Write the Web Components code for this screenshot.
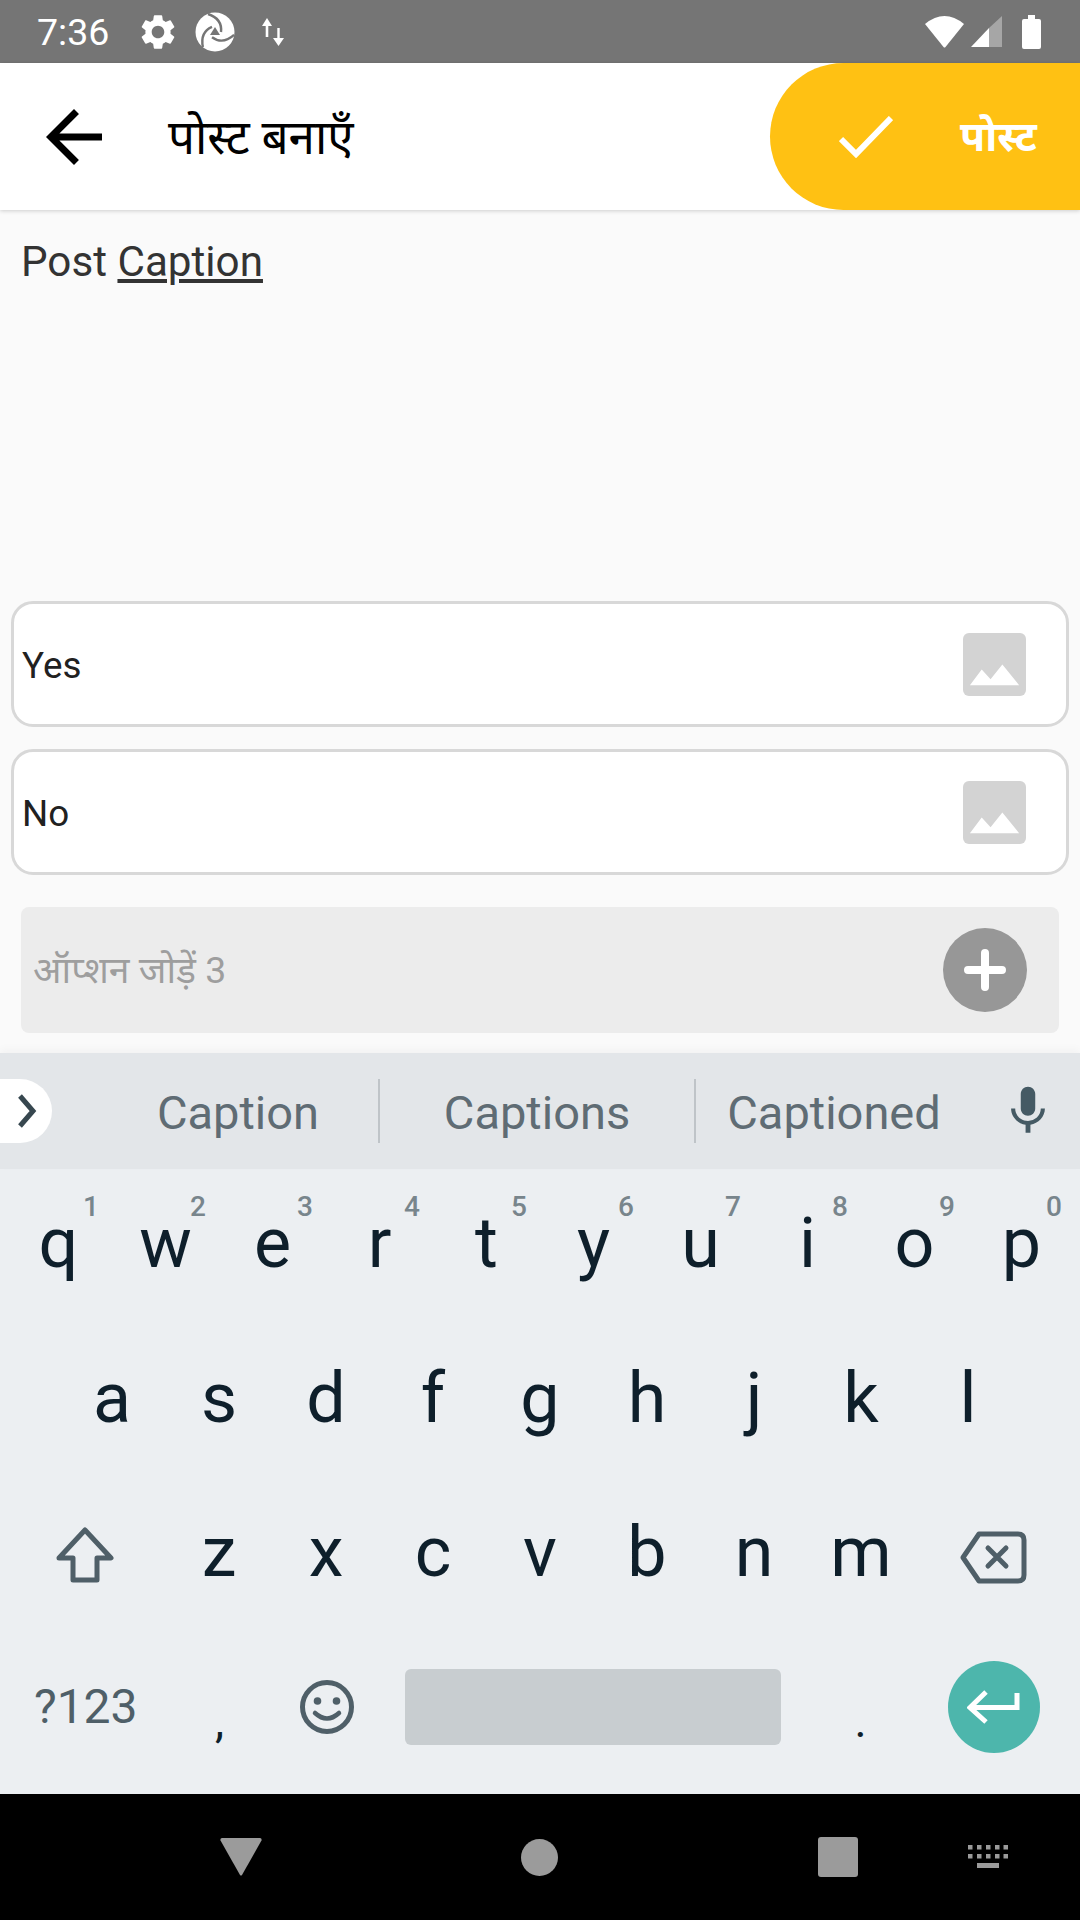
<!DOCTYPE html>
<html lang="hi">
<head>
<meta charset="utf-8">
<title>पोस्ट बनाएँ</title>
<style>
  html, body { margin: 0; padding: 0; }
  body {
    width: 1080px;
    height: 1920px;
    display: flex;
    flex-direction: column;
    overflow: hidden;
    background: #fafafa;
    font-family: Roboto, "Noto Sans Devanagari", "Lohit Devanagari", "Noto Sans", FreeSans, sans-serif;
  }
  main-content { flex: 1; }
</style>
</head>
<body>
  <status-bar></status-bar>
  <app-bar>पोस्ट बनाएँ</app-bar>
  <main-content>
    <caption-field>Post <u>Caption</u></caption-field>
    <option-card>Yes</option-card>
    <option-card>No</option-card>
    <add-option>ऑप्शन जोड़ें 3</add-option>
  </main-content>
  <suggestion-strip>
    <span>Caption</span>
    <span>Captions</span>
    <span>Captioned</span>
  </suggestion-strip>
  <key-board></key-board>
  <nav-bar></nav-bar>

<script>
function define(name, html) {
  const template = document.createElement("template");
  template.innerHTML = html;
  customElements.define(name, class extends HTMLElement {
    constructor() {
      super();
      this.attachShadow({ mode: "open" });
      this.shadowRoot.appendChild(template.content.cloneNode(true));
    }
  });
}

define("status-bar", `
<style>
  :host { display: flex; align-items: center; height: 63px; flex: none; padding: 0 39px 0 37px; box-sizing: border-box; background: #757575; color: #fff; }
  .time { font-size: 37.5px; width: 72px; white-space: nowrap; }
  svg { display: block; flex: none; fill: #fff; }
  .gear { margin-left: 28px; }
  .logo { margin-left: 16px; }
  .data { margin-left: 27px; }
  .wifi { margin-left: auto; }
  .signal { margin-left: 6px; }
  .battery { margin-left: 20px; }
</style>
<span class="time">7:36</span>
<svg class="gear" width="42" height="42" viewBox="0 0 24 24"><path d="M19.14 12.94c.04-.3.06-.61.06-.94 0-.32-.02-.64-.07-.94l2.03-1.58a.49.49 0 0 0 .12-.61l-1.92-3.32a.488.488 0 0 0-.59-.22l-2.39.96c-.5-.38-1.03-.7-1.62-.94l-.36-2.54a.484.484 0 0 0-.48-.41h-3.84c-.24 0-.43.17-.47.41l-.36 2.54c-.59.24-1.13.57-1.62.94l-2.39-.96c-.22-.08-.47 0-.59.22L2.74 8.87c-.12.21-.08.47.12.61l2.03 1.58c-.05.3-.09.63-.09.94s.02.64.07.94l-2.03 1.58a.49.49 0 0 0-.12.61l1.92 3.32c.12.22.37.29.59.22l2.39-.96c.5.38 1.03.7 1.62.94l.36 2.54c.05.24.24.41.48.41h3.84c.24 0 .44-.17.47-.41l.36-2.54c.59-.24 1.13-.56 1.62-.94l2.39.96c.22.08.47 0 .59-.22l1.92-3.32c.12-.22.07-.47-.12-.61l-2.01-1.58zM12 15.6c-1.98 0-3.6-1.62-3.6-3.6s1.62-3.6 3.6-3.6 3.6 1.62 3.6 3.6-1.62 3.6-3.6 3.6z"/></svg>
<svg class="logo" width="40" height="40" viewBox="0 0 40 40">
  <circle cx="20" cy="20" r="19.5"/>
  <g fill="none" stroke="#757575" stroke-width="2.4">
    <path d="M13 2C22 5 27 11 26 20"/>
    <path d="M13 2C22 5 27 11 26 20" transform="rotate(120 20 20)"/>
    <path d="M13 2C22 5 27 11 26 20" transform="rotate(240 20 20)"/>
  </g>
  <path d="M20 15L25 23L15 23Z" fill="#757575"/>
</svg>
<svg class="data" width="23" height="28" viewBox="0 0 23 28">
  <path d="M0 8L5 0L10 8H6.3V19H3.7V8Z"/>
  <path d="M11 20H15.3V10H17.7V20H22L16.5 28Z"/>
</svg>
<svg class="wifi" width="41" height="32" viewBox="0 0 41 32"><path d="M1 8Q20.5-8 40 8L21.5 31Q20.5 32 19.5 31Z"/></svg>
<svg class="signal" width="31" height="31" viewBox="0 0 31 31">
  <path d="M0 31L18 12V31Z"/>
  <path d="M18 12L31 0V31H18Z" fill="#a6a6a6"/>
</svg>
<svg class="battery" width="19" height="34" viewBox="0 0 19 34"><path d="M6 0H13V4H17Q19 4 19 6V32Q19 34 17 34H2Q0 34 0 32V6Q0 4 2 4H6Z"/></svg>
`);

define("app-bar", `
<style>
  :host { display: flex; align-items: center; height: 147px; flex: none; padding-left: 32px; box-sizing: border-box; background: #fff; color: #000; position: relative; z-index: 1; box-shadow: 0 1px 4px rgba(0,0,0,.18); }
  .back { display: block; flex: none; }
  .title { margin-left: 52px; padding-top: 10px; font-size: 47.5px; white-space: nowrap; }
  post-button { margin-left: auto; align-self: flex-start; }
</style>
<svg class="back" width="84" height="84" viewBox="0 0 24 24"><path d="M20 11H7.83l5.59-5.59L12 4l-8 8 8 8 1.41-1.41L7.83 13H20v-2z"/></svg>
<span class="title"><slot></slot></span>
<post-button></post-button>
`);

define("post-button", `
<style>
  :host { display: flex; align-items: center; width: 310px; height: 147px; box-sizing: border-box; padding-left: 69px; background: #ffc113; border-radius: 73.5px 0 0 73.5px; color: #fff; }
  svg { display: block; flex: none; }
  span { margin-left: 67px; padding-top: 8px; font-size: 41px; font-weight: 700; white-space: nowrap; }
</style>
<svg width="54" height="42" viewBox="0 0 54 42"><path d="M2 23L17 38L52 2" fill="none" stroke="#fff" stroke-width="6"/></svg>
<span>पोस्ट</span>
`);

define("main-content", `
<style>
  :host { display: flex; flex-direction: column; min-height: 0; }
</style>
<slot></slot>
`);

define("caption-field", `
<style>
  :host { display: block; height: 391px; box-sizing: border-box; padding: 28px 21px 0; font-size: 42.2px; line-height: 48px; color: #333; flex: none; }
</style>
<slot></slot>
`);

define("option-card", `
<style>
  :host { display: flex; align-items: center; justify-content: space-between; height: 126px; flex: none; box-sizing: border-box; margin: 0 11px 22px; padding: 0 40px 0 8px; background: #fff; border: 3px solid #d8d8d8; border-radius: 22px; font-size: 36.75px; color: #212121; }
  span { padding-top: 2px; }
  svg { display: block; flex: none; }
</style>
<span><slot></slot></span>
<svg width="63" height="63" viewBox="0 0 64 64">
  <rect width="64" height="64" rx="6" fill="#d3d3d3"/>
  <path d="M7 53L19 37L28 47L40 32L57 53Z" fill="#fff"/>
</svg>
`);

define("add-option", `
<style>
  :host { display: flex; align-items: center; justify-content: space-between; height: 126px; flex: none; box-sizing: border-box; margin: 10px 21px 0; padding: 0 32px 0 12px; background: #ececec; border-radius: 8px; font-size: 37.3px; color: #9e9e9e; }
  span { padding-top: 6px; }
  svg { display: block; flex: none; }
</style>
<span><slot></slot></span>
<svg width="84" height="84" viewBox="0 0 84 84">
  <circle cx="42" cy="42" r="42" fill="#979797"/>
  <path d="M42 25V59M25 42H59" stroke="#fff" stroke-width="8" stroke-linecap="round"/>
</svg>
`);

define("suggestion-strip", `
<style>
  :host { display: flex; align-items: center; height: 116px; flex: none; background: #e3e6e9; position: relative; box-shadow: 0 -4px 8px rgba(0,0,0,.03); color: #5f6c74; font-size: 47px; }
  .pill { display: flex; align-items: center; justify-content: center; width: 52px; height: 64px; margin-right: 46px; padding-left: 2px; box-sizing: border-box; flex: none; background: #fff; border-radius: 0 32px 32px 0; }
  svg { display: block; flex: none; }
  .cells { display: flex; align-items: center; height: 64px; }
  ::slotted(span) { display: flex; align-items: center; justify-content: center; height: 64px; box-sizing: border-box; padding-top: 2px; flex: none; white-space: nowrap; }
  ::slotted(span:nth-child(1)) { width: 282px; border-right: 2px solid #bfc4c8; }
  ::slotted(span:nth-child(2)) { width: 316px; border-right: 2px solid #bfc4c8; }
  ::slotted(span:nth-child(3)) { width: 276px; }
  .mic { margin-left: 27px; }
</style>
<div class="pill"><svg width="20" height="34" viewBox="0 0 20 34"><path d="M3 2L16 17L3 32" fill="none" stroke="#37474f" stroke-width="5"/></svg></div>
<div class="cells"><slot></slot></div>
<svg class="mic" width="58" height="58" viewBox="0 0 24 24" fill="#455a64"><path d="M12 14c1.66 0 2.99-1.34 2.99-3L15 5c0-1.66-1.34-3-3-3S9 3.34 9 5v6c0 1.66 1.34 3 3 3zm5.3-3c0 3-2.54 5.1-5.3 5.1S6.7 14 6.7 11H5c0 3.41 2.72 6.23 6 6.72V21h2v-3.28c3.28-.48 6-3.3 6-6.72h-1.7z"/></svg>
`);

define("kb-key", `
<style>
  :host { display: flex; align-items: center; justify-content: center; width: 107px; height: 100%; flex: none; position: relative; font-size: 70px; color: #0e1f2b; }
  .hint { position: absolute; left: 72px; top: 24px; width: 28px; text-align: center; font-size: 28px; font-weight: 500; line-height: 34px; color: #78858c; }
</style>
<slot></slot>
<span class="hint"><slot name="hint"></slot></span>
`);

define("key-row", `
<style>
  :host { display: flex; justify-content: center; align-items: stretch; height: 154.5px; flex: none; }
</style>
<slot></slot>
`);

define("key-board", `
<style>
  :host { display: flex; flex-direction: column; height: 625px; flex: none; box-sizing: border-box; background: #eceff2; }
  key-row:first-of-type { margin-top: -3px; }
  .wide { width: 160.5px; }
  svg { display: block; }
  .sym { font-size: 48px; color: #4f5f68; }
  .small { font-size: 46px; padding-top: 28px; box-sizing: border-box; }
  .space { width: 427px; }
  .space div { width: 376px; height: 76px; margin-left: -2px; background: #c8cdd0; border-radius: 6px; }
  .enter { width: 92px; height: 92px; margin-top: 1px; border-radius: 50%; background: #4db6ac; display: flex; align-items: center; justify-content: center; }
  .shift { margin-top: 6px; }
  .del { margin: 10px 0 0 -2px; }
</style>
<key-row>
  <kb-key>q<span slot="hint">1</span></kb-key>
  <kb-key>w<span slot="hint">2</span></kb-key>
  <kb-key>e<span slot="hint">3</span></kb-key>
  <kb-key>r<span slot="hint">4</span></kb-key>
  <kb-key>t<span slot="hint">5</span></kb-key>
  <kb-key>y<span slot="hint">6</span></kb-key>
  <kb-key>u<span slot="hint">7</span></kb-key>
  <kb-key>i<span slot="hint">8</span></kb-key>
  <kb-key>o<span slot="hint">9</span></kb-key>
  <kb-key>p<span slot="hint">0</span></kb-key>
</key-row>
<key-row>
  <kb-key>a</kb-key><kb-key>s</kb-key><kb-key>d</kb-key><kb-key>f</kb-key><kb-key>g</kb-key><kb-key>h</kb-key><kb-key>j</kb-key><kb-key>k</kb-key><kb-key>l</kb-key>
</key-row>
<key-row>
  <kb-key class="wide"><svg class="shift" width="58" height="56" viewBox="0 0 58 56"><path d="M29 3L55 31H41V53H17V31H3Z" fill="none" stroke="#4f5f68" stroke-width="5" stroke-linejoin="round"/></svg></kb-key>
  <kb-key>z</kb-key><kb-key>x</kb-key><kb-key>c</kb-key><kb-key>v</kb-key><kb-key>b</kb-key><kb-key>n</kb-key><kb-key>m</kb-key>
  <kb-key class="wide"><svg class="del" width="67" height="53" viewBox="0 0 67 53"><path d="M19 3H58Q64 3 64 9V44Q64 50 58 50H19L3 26.5Z" fill="none" stroke="#4f5f68" stroke-width="5" stroke-linejoin="round"/><path d="M28 17L46 35M46 17L28 35" stroke="#4f5f68" stroke-width="5" stroke-linecap="round"/></svg></kb-key>
</key-row>
<key-row>
  <kb-key class="wide sym">?123</kb-key>
  <kb-key class="small">,</kb-key>
  <kb-key><svg width="54" height="54" viewBox="0 0 54 54"><circle cx="27" cy="27" r="24.5" fill="none" stroke="#4f5f68" stroke-width="5"/><circle cx="17.5" cy="21" r="3.8" fill="#4f5f68"/><circle cx="36.5" cy="21" r="3.8" fill="#4f5f68"/><path d="M15 33Q27 44 39 33" fill="none" stroke="#4f5f68" stroke-width="4.5" stroke-linecap="round"/></svg></kb-key>
  <kb-key class="space"><div></div></kb-key>
  <kb-key class="small">.</kb-key>
  <kb-key class="wide"><div class="enter"><svg width="54" height="36" viewBox="0 0 54 36"><path d="M19 3L3 18.5L19 33M4 18.5H50V4" fill="none" stroke="#fff" stroke-width="5"/></svg></div></kb-key>
</key-row>
`);

define("nav-bar", `
<style>
  :host { display: block; height: 126px; flex: none; background: #000; position: relative; }
  .row { display: grid; grid-template-columns: 220px 42px 259px 37px 260px 40px 110px 40px; align-items: center; height: 126px; box-sizing: border-box; }
  svg { display: block; }
</style>
<div class="row">
  <span></span>
  <svg width="42" height="38" viewBox="0 0 42 38"><path d="M2 0H40Q42 0 41.500 2.500L22 37Q21 38 20 37L.5 2.500Q0 0 2 0Z" fill="#9b9b9b"/></svg>
  <span></span>
  <svg width="37" height="37" viewBox="0 0 37 37"><circle cx="18.500" cy="18.500" r="18.500" fill="#9b9b9b"/></svg>
  <span></span>
  <svg width="40" height="40" viewBox="0 0 40 40"><rect width="40" height="40" rx="3" fill="#9b9b9b"/></svg>
  <span></span>
  <svg width="40" height="24" viewBox="0 0 40 24" fill="#9b9b9b"><path d="M0 0h4.500v4.500H0zM9 0h4.500v4.500H9zM18 0h4.500v4.500H18zM27 0h4.500v4.500H27zM35.500 0H40v4.500h-4.500zM0 9h4.500v4.500H0zM9 9h4.500v4.500H9zM18 9h4.500v4.500H18zM27 9h4.500v4.500H27zM35.500 9H40v4.500h-4.500zM9 18h22v5H9z"/></svg>
</div>
`);
</script>
</body>
</html>
